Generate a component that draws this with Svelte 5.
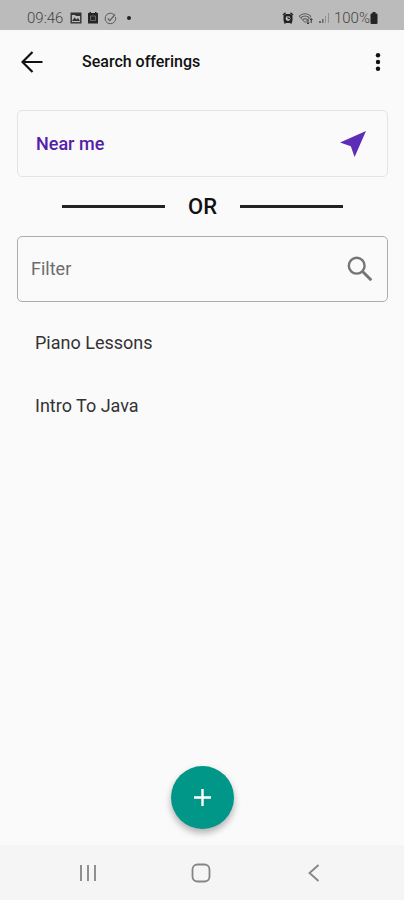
<script>
  let filter = $state('');
  const offerings = ['Piano Lessons', 'Intro To Java'];
  const shown = $derived(
    offerings.filter((name) => name.toLowerCase().includes(filter.toLowerCase()))
  );
</script>

<div class="screen">
  <div class="status">
    <div class="group">
      <span class="time">09:46</span>
      <svg width="12" height="12" viewBox="0 0 12 12" aria-hidden="true">
        <rect x="1.2" y="1.2" width="9.6" height="9.6" fill="none" stroke="#333" stroke-width="1.4" />
        <path d="M1 1h10v3H6L5 3H1zM2 9l2.5-3.5 2 2L8 6l2 3z" fill="#333" />
      </svg>
      <svg width="12" height="12" viewBox="0 0 12 12" aria-hidden="true">
        <path d="M1 1h1.5V0H4v1h4V0h1.500v1H11v10.500H1z" fill="#252525" />
        <path d="M3.500 4h5v4.500h-5z" fill="none" stroke="#777" stroke-width="0.800" />
      </svg>
      <svg width="13" height="13" viewBox="0 0 13 13" fill="none" stroke="#5c5c5c" aria-hidden="true">
        <path d="M9.800 2.400A5.300 5.300 0 1 0 11.500 5" />
        <path d="M3.800 6.500l2 2.200L11 2.500" stroke-width="1.200" />
      </svg>
      <svg class="dot" width="4" height="4" viewBox="0 0 4 4" aria-hidden="true">
        <circle cx="2" cy="2" r="2" fill="#222" />
      </svg>
    </div>
    <div class="group right">
      <svg width="12" height="12" viewBox="0 0 12 12" aria-hidden="true">
        <path d="M1 3l2.500-2.200M11 3L8.500.8M2.500 11.500l1-1.500M9.500 11.500l-1-1.500" stroke="#222" stroke-width="1.400" />
        <rect x="1.500" y="2" width="9" height="9" rx="3" fill="#222" />
        <circle cx="6" cy="6.500" r="2.400" fill="#bbb" />
        <path d="M6 4.500v2h2" fill="none" stroke="#222" />
      </svg>
      <svg width="16" height="13" viewBox="0 0 16 13" fill="none" stroke="#555" aria-hidden="true">
        <path d="M1 4.200Q7 -.8 13 4.200L7 10.500z" stroke-width="0.900" />
        <path d="M3 5.500Q7 2.500 11 5.500M5 7.500Q7 6 9 7.500" stroke-width="1.200" />
        <path d="M10 12V7.500M8.700 10.700L10 12l1.300-1.300M13.200 6.500V11M12 8l1.200-1.300L14.500 8" stroke="#333" />
      </svg>
      <svg width="12" height="12" viewBox="0 0 12 12" aria-hidden="true">
        <path d="M1 9h2v2H1zM4 7h1.500v4H4z" fill="#666" />
        <path d="M7 4h1v7H7zM10 1h1v10h-1z" fill="#909090" />
      </svg>
      <span class="battery">100%</span>
      <svg width="8" height="12" viewBox="0 0 8 12" aria-hidden="true">
        <path d="M2.500 0h3v1.500H6.500a1 1 0 0 1 1 1V11a1 1 0 0 1-1 1h-5a1 1 0 0 1-1-1V2.500a1 1 0 0 1 1-1h1z" fill="#252525" />
      </svg>
    </div>
  </div>

  <header>
    <button class="icon" aria-label="Back">
      <svg width="22" height="22" viewBox="0 0 22 22" fill="none" stroke="#111" stroke-width="2.200" aria-hidden="true">
        <path d="M21.500 11H1.800M11.500 1L1.500 11l10 10" />
      </svg>
    </button>
    <h1>Search offerings</h1>
    <button class="icon more" aria-label="More options">
      <svg width="6" height="20" viewBox="0 0 6 20" fill="#111" aria-hidden="true">
        <circle cx="3" cy="3.300" r="2.200" />
        <circle cx="3" cy="10" r="2.200" />
        <circle cx="3" cy="16.700" r="2.200" />
      </svg>
    </button>
  </header>

  <main>
    <button class="near">
      <span>Near me</span>
      <svg width="26" height="26" viewBox="0 0 26 26" aria-hidden="true">
        <path d="M26 0L14.600 26L10.800 15.200L0 11.500z" fill="#5e2db8" />
      </svg>
    </button>

    <div class="or">
      <span class="line"></span>
      <span>OR</span>
      <span class="line"></span>
    </div>

    <label class="filter">
      <input type="text" placeholder="Filter" aria-label="Filter" bind:value={filter} />
      <svg width="26" height="26" viewBox="0 0 26 26" fill="none" stroke="#757575" aria-hidden="true">
        <circle cx="9.700" cy="9.700" r="7.900" stroke-width="2.400" />
        <path d="M15.800 15.800L24.300 24.300" stroke-width="3" />
      </svg>
    </label>

    <ul>
      {#each shown as name}
        <li><button class="item">{name}</button></li>
      {/each}
    </ul>
  </main>

  <button class="fab" aria-label="Add offering">
    <svg width="17" height="17" viewBox="0 0 17 17" aria-hidden="true">
      <path d="M8.500 0v17M0 8.500h17" stroke="#fff" stroke-width="2.400" />
    </svg>
  </button>

  <nav>
    <button aria-label="Recent apps">
      <svg width="18" height="18" viewBox="0 0 18 18" stroke="#858585" stroke-width="1.800" aria-hidden="true">
        <path d="M2 1v16M9 1v16M16 1v16" />
      </svg>
    </button>
    <button aria-label="Home">
      <svg width="20" height="20" viewBox="0 0 20 20" fill="none" stroke="#858585" stroke-width="1.800" aria-hidden="true">
        <rect x="1.500" y="1.500" width="17" height="17" rx="5" />
      </svg>
    </button>
    <button aria-label="System back">
      <svg width="18" height="18" viewBox="0 0 18 18" fill="none" stroke="#858585" stroke-width="1.800" aria-hidden="true">
        <path d="M13.500 1L4.500 9l9 8" />
      </svg>
    </button>
  </nav>
</div>

<style>
  :global(body) {
    margin: 0;
    background: #fafafa;
  }

  .screen {
    display: flex;
    flex-direction: column;
    min-height: 100vh;
    background: #fafafa;
    color: #222;
    font-family: Roboto, 'Liberation Sans', sans-serif;
  }

  button {
    display: flex;
    align-items: center;
    margin: 0;
    padding: 0;
    border: 0;
    background: none;
    color: inherit;
    font: inherit;
    cursor: pointer;
  }

  svg {
    display: block;
    flex: none;
  }

  .status {
    display: flex;
    align-items: center;
    justify-content: space-between;
    box-sizing: border-box;
    height: 30px;
    padding: 6px 26px 0 27px;
    background: #bbb;
    color: #444;
    font-size: 15px;
    font-weight: 300;
    line-height: 24px;
  }

  .group {
    display: flex;
    align-items: center;
    gap: 5px;
  }

  .time {
    margin-right: 2px;
  }

  .dot {
    margin-left: 5px;
  }

  .group.right {
    gap: 4px;
  }

  .battery {
    margin-right: -4px;
  }

  header {
    display: flex;
    align-items: center;
    height: 63px;
    padding: 0 16px 0 21px;
  }

  h1 {
    flex: 1;
    margin: 0 0 0 39px;
    color: #111;
    font-size: 16px;
    font-weight: 500;
    line-height: 24px;
  }

  .more {
    justify-content: center;
    width: 20px;
  }

  main {
    flex: 1;
    padding: 17px 16px 0 17px;
  }

  .near,
  .filter {
    display: flex;
    align-items: center;
    justify-content: space-between;
    box-sizing: border-box;
    width: 100%;
    border-radius: 5px;
  }

  .near {
    height: 67px;
    padding: 0 21px 0 18px;
    border: 1px solid #e4e4e4;
    color: #5420a8;
    font-size: 18px;
    font-weight: 500;
  }

  .or {
    display: flex;
    align-items: center;
    justify-content: center;
    gap: 23px;
    height: 59px;
    padding: 0 45px;
    color: #111;
    font-size: 22px;
    font-weight: 500;
  }

  .line {
    flex: 1;
    height: 3px;
    background: #222;
  }

  .filter {
    height: 66px;
    padding: 0 14px 0 13px;
    border: 1px solid #adadad;
  }

  input {
    flex: 1;
    min-width: 0;
    padding: 0;
    border: 0;
    outline: 0;
    background: none;
    color: #222;
    font: inherit;
    font-size: 18px;
    line-height: 24px;
  }

  input::placeholder {
    color: #6c6c6c;
    opacity: 1;
  }

  ul {
    margin: 9px 0 0;
    padding: 0;
    list-style: none;
  }

  .item {
    width: 100%;
    height: 63px;
    padding: 0 18px;
    color: #333;
    font-size: 18px;
    text-align: left;
  }

  .fab {
    align-self: center;
    justify-content: center;
    width: 63px;
    height: 63px;
    margin-bottom: 16px;
    border-radius: 50%;
    background: #009688;
    box-shadow: 0 4px 7px rgba(0, 0, 0, 0.3);
  }

  nav {
    display: flex;
    justify-content: center;
    height: 55px;
    padding-right: 2px;
    background: #f5f5f5;
  }

  nav button {
    justify-content: center;
    width: 28%;
  }
</style>
